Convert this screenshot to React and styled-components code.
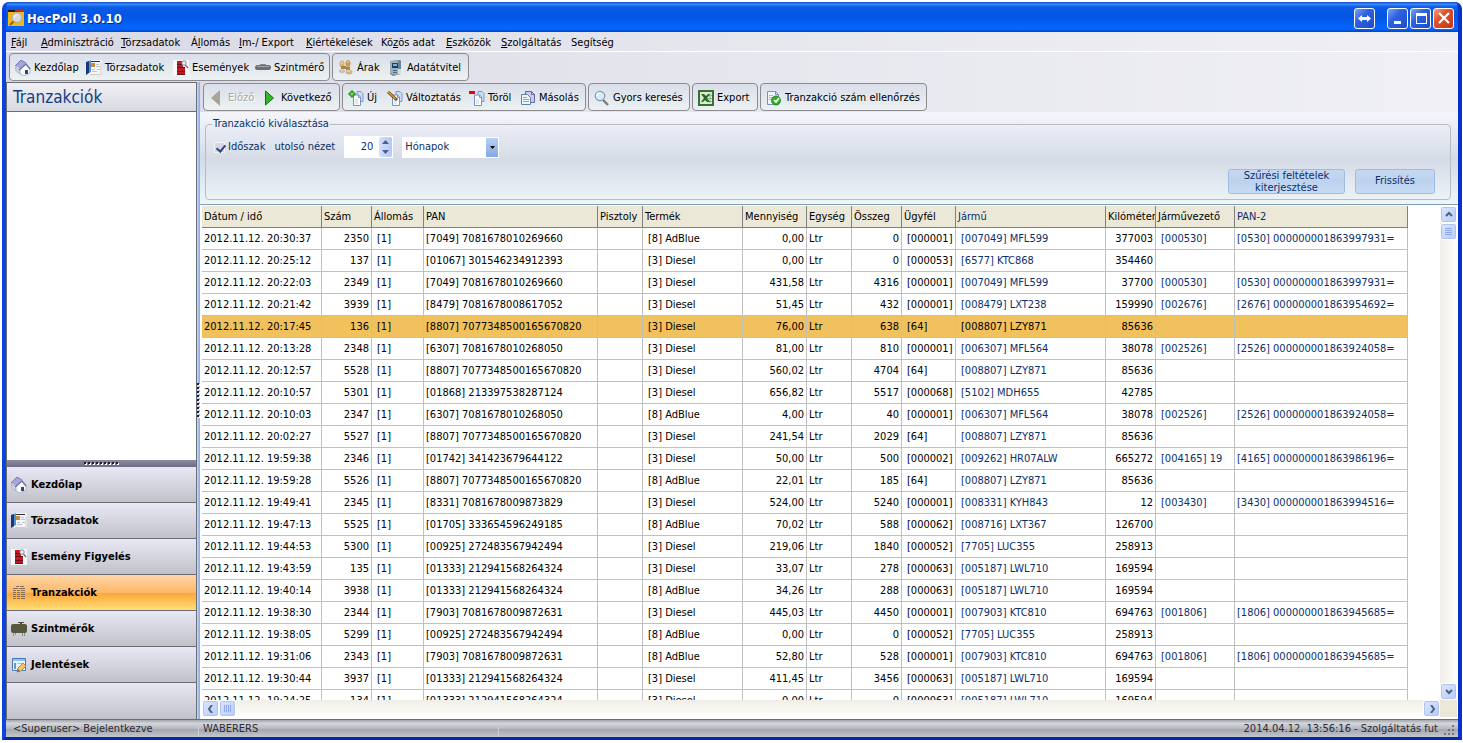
import styled, { createGlobalStyle } from "styled-components";

const GlobalStyle = createGlobalStyle`
  * {
    box-sizing: border-box;
  }
  body {
    margin: 0;
    background: #fff;
    color: #000;
    font: 11px/14px "DejaVu Sans Condensed", "DejaVu Sans", sans-serif;
  }
  button, input, select {
    font: inherit;
    color: inherit;
    padding: 0;
    margin: 0;
    border: 0;
    background: none;
    border-radius: 0;
  }
`;

const Window = styled.div`
  height: calc(100vh - 5px);
  margin: 2px 1px 3px 2px;
  display: flex;
  flex-direction: column;
  overflow: hidden;
  border: 4px solid #0a44dc;
  border-top: 0;
  border-right-color: #0831c8;
  border-bottom-color: #0627b4;
  border-bottom-width: 3px;
  border-radius: 7px 7px 0 0;
  background: #0a44dc;
`;

const TitleBar = styled.header`
  flex: 0 0 30px;
  display: flex;
  align-items: center;
  gap: 3px;
  margin: 0 -4px;
  padding: 2px 8px 0 6px;
  background: linear-gradient(#0a3fc0 0, #3b8cf8 2px, #0a5ce8 5px, #0355e3 14px, #0463fa 24px, #0566ff 27px, #0340cf 30px);
  h1 {
    flex: 1;
    margin: 2px 0 0;
    font-size: 13px;
    line-height: 16px;
    color: #fff;
    text-shadow: 1px 1px #0a2a80;
  }
`;

const CaptionButton = styled.button`
  width: 21px;
  height: 21px;
  margin-left: ${(p) => (p.$apart ? "9px" : "-1px")};
  display: flex;
  align-items: center;
  justify-content: center;
  border: 1px solid #fff;
  border-radius: 3px;
  background: ${(p) =>
    p.$close
      ? "linear-gradient(135deg, #f0a080, #e0502c 40%, #c03810)"
      : "linear-gradient(135deg, #7ca4f4, #2c62e0 40%, #1c4cc8)"};
`;

const MenuBar = styled.nav`
  flex: 0 0 20px;
  display: flex;
  align-items: center;
  padding: 2px 0 0 5px;
  border-bottom: 1px solid #fff;
  background: linear-gradient(90deg, #d8d8e6, #e4e4ec 40%, #f0f0f4);
`;

const MenuItem = styled.button`
  flex: 0 0 ${(p) => p.$w}px;
  text-align: left;
  white-space: nowrap;
`;

const Content = styled.div`
  flex: 1;
  min-height: 0;
  display: flex;
  flex-direction: column;
  background: linear-gradient(90deg, #d8d8e6, #e4e4ec 40%, #f0f0f6);
`;

const ToolBar = styled.div`
  display: flex;
  gap: 2px;
  padding: 1px 3px;
`;

const ToolGroup = styled.div`
  height: 28px;
  display: flex;
  align-items: center;
  padding: 2px 5px 0;
  border: 1px solid #8c8c90;
  border-radius: 4px;
  background: linear-gradient(#d9deea, #e3e8ee 50%, #ecf1f1);
`;

const Tool = styled.button`
  flex: 0 0 ${(p) => p.$w}px;
  height: 20px;
  display: flex;
  align-items: center;
  gap: 3px;
  min-width: 0;
  white-space: nowrap;
  &:disabled {
    color: #a8a8a0;
    text-shadow: 1px 1px #fff;
  }
  svg {
    flex: none;
  }
`;

const Body = styled.div`
  flex: 1;
  min-height: 0;
  display: flex;
`;

const SideBar = styled.aside`
  flex: 0 0 191px;
  display: flex;
  flex-direction: column;
  border: 1px solid #6c6c74;
  border-bottom: 0;
  background: #fff;
  h2 {
    flex: 0 0 27px;
    margin: 0;
    padding: 5px 6px;
    font-size: 17px;
    font-weight: normal;
    line-height: 18px;
    color: #153e82;
    border-bottom: 1px solid #6c6c74;
    background: linear-gradient(#f0f0f4, #d8dae2);
  }
`;

const SideList = styled.div`
  flex: 1;
`;

const Grip = styled.div`
  flex: 0 0 7px;
  display: flex;
  align-items: center;
  justify-content: center;
  background: linear-gradient(#8c8ca0, #6c6c88);
`;

const NavButton = styled.button`
  flex: 0 0 36px;
  display: flex;
  align-items: center;
  gap: 4px;
  padding: 1px 0 0 4px;
  font-weight: bold;
  border-bottom: 1px solid #6c6c74;
  background: ${(p) =>
    p.$active
      ? "linear-gradient(#fdd6a8, #fdb868 50%, #fda53a 51%, #fdde74)"
      : "linear-gradient(#e9e9f6, #d4d5de 50%, #c0c1c9)"};
`;

const NavFiller = styled.div`
  flex: 0 0 36px;
  background: linear-gradient(#e9e9f6, #d4d5de 50%, #c0c1c9);
`;

const Splitter = styled.div`
  flex: 0 0 3px;
  display: flex;
  align-items: center;
  background: linear-gradient(90deg, #c4dafa, #84a8e0);
`;

const Main = styled.main`
  flex: 1;
  min-width: 0;
  display: flex;
  flex-direction: column;
`;

const FilterPanel = styled.section`
  padding: 5px 7px 4px 5px;
  border-bottom: 1px solid #7f9db9;
  color: #0b2f6b;
  background: linear-gradient(#f4f6fa, #e8ebf4 20%, #d5dbe6 52%, #e2e8f0 75%, #edf6f8);
`;

const FieldSet = styled.fieldset`
  height: 83px;
  min-width: 0;
  margin: 0;
  padding: 5px 15px 7px 8px;
  display: flex;
  flex-direction: column;
  justify-content: space-between;
  border: 1px solid #b8bcc0;
  border-radius: 4px;
  legend {
    margin-left: -2px;
    padding: 0 1px;
  }
`;

const FilterRow = styled.div`
  height: 22px;
  display: flex;
  align-items: center;
  justify-content: ${(p) => (p.$end ? "flex-end" : "flex-start")};
  gap: ${(p) => (p.$end ? 10 : 9)}px;
  label {
    display: flex;
    align-items: center;
    gap: 3px;
  }
`;

const CheckBox = styled.input`
  appearance: none;
  width: 11px;
  height: 11px;
  display: flex;
  border: 1px solid #f4f4f4;
  background: #d4d8e4;
  &:checked::before {
    content: "";
    width: 4px;
    height: 7px;
    margin: 0 0 0 3px;
    border: solid #2c4888;
    border-width: 0 2px 2px 0;
    transform: rotate(40deg);
  }
`;

const Spinner = styled.span`
  width: 49px;
  height: 22px;
  display: flex;
  padding: 1px;
  background: #fff;
  input {
    flex: 1;
    min-width: 0;
    padding-right: 6px;
    text-align: right;
    outline: none;
  }
`;

const SpinButtons = styled.span`
  flex: 0 0 13px;
  display: flex;
  flex-direction: column;
  border-radius: 2px;
  background: linear-gradient(90deg, #d4e0fc, #b4c8f4);
  button {
    flex: 1;
    display: flex;
    align-items: center;
    justify-content: center;
  }
`;

const SelectBox = styled.span`
  width: 97px;
  height: 21px;
  display: grid;
  grid-template-columns: 1fr 12px;
  padding: 1px;
  background: #fff;
  select {
    grid-area: 1 / 1 / 2 / 3;
    appearance: none;
    padding-left: 2px;
    outline: none;
  }
  span {
    grid-area: 1 / 2;
    display: flex;
    align-items: center;
    justify-content: center;
    pointer-events: none;
    background: linear-gradient(#b8d0f4, #84a8e0);
  }
`;

const PanelButton = styled.button`
  width: ${(p) => p.$w}px;
  height: 25px;
  line-height: 12px;
  border: 1px solid #9cbce4;
  border-radius: 3px;
  background: linear-gradient(#c6d8f0, #bcd2ee 50%, #c8dcf4);
`;

const GridArea = styled.div`
  flex: 1;
  min-height: 0;
  display: grid;
  grid-template: minmax(0, 1fr) 17px / minmax(0, 1fr) 17px;
  padding: 1px 1px 2px 2px;
  background: #fff;
`;

const GridView = styled.div`
  overflow: hidden;
`;

const Table = styled.table`
  table-layout: fixed;
  width: 1206px;
  border-collapse: separate;
  border-spacing: 0;
  th,
  td {
    height: 22px;
    padding: 0 0 0 2px;
    overflow: hidden;
    white-space: nowrap;
    border: solid #c0c0c0;
    border-width: 0 1px 1px 0;
  }
  th {
    font-weight: normal;
    text-align: left;
    border-color: #808080;
    background: #ebe8d8;
  }
`;

const HeadCell = styled.th`
  color: ${(p) => (p.$blue ? "#0b2f6b" : "#000")};
`;

const Row = styled.tr`
  background: ${(p) => (p.$selected ? "#f1c15d" : "#fff")};
`;

const Cell = styled.td`
  && {
    padding-left: ${(p) => (p.$inset ? 5 : 2)}px;
    padding-right: ${(p) => (p.$right ? 2 : 0)}px;
  }
  text-align: ${(p) => (p.$right ? "right" : "left")};
  color: ${(p) => (p.$blue ? "#0b2f6b" : "#000")};
`;

const ScrollBar = styled.div`
  display: flex;
  flex-direction: ${(p) => (p.$vertical ? "column" : "row")};
  background: linear-gradient(${(p) => (p.$vertical ? "90deg" : "180deg")}, #f0eee8, #fefefb);
`;

const ScrollButton = styled.button`
  flex: 0 0 17px;
  display: flex;
  align-items: center;
  justify-content: center;
  border: 1px solid #fff;
  border-radius: 3px;
  box-shadow: inset 0 0 0 1px #b0c4f0;
  background: linear-gradient(135deg, #dce6fe, #b8ccf8);
`;

const Track = styled.div`
  flex: 1;
`;

const Corner = styled.div`
  background: #ebe8d8;
`;

const StatusBar = styled.footer`
  flex: 0 0 18px;
  display: flex;
  align-items: center;
  color: #2c2c34;
  border-top: 1px solid #6c6c74;
  background: linear-gradient(#a4a6ae, #d4d6da 20%, #b8bac2 50%, #a4a6b0 55%, #c4c6cc);
`;

const StatusCell = styled.span`
  flex: ${(p) => (p.$w ? `0 0 ${p.$w}px` : "1")};
  padding: 0 3px 0 ${(p) => p.$pad || 4}px;
  text-align: ${(p) => (p.$w ? "left" : "right")};
  border-right: 1px solid ${(p) => (p.$w ? "#ccced4" : "transparent")};
`;

const Icon = ({ children, w = 16, h = 16 }) => (
  <svg width={w} height={h} viewBox={`0 0 ${w} ${h}`} aria-hidden="true">
    {children}
  </svg>
);

const HomeIcon = () => (
  <Icon>
    <path d="M0 6 6 0l5 3-5 6z" fill="#a8a4dc" />
    <path d="m0 6 6-6 5 3" fill="none" stroke="#7c78c0" />
    <path d="m0 7 5 3v4L1 11z" fill="#d4d6e0" stroke="#a0a4b4" strokeWidth="0.6" />
    <path d="M5 10v4l4 2 6-3V8l-4-4z" fill="#fafafa" stroke="#a0a8bc" strokeWidth="0.8" />
    <path d="m4 10 7-6 4 5" fill="none" stroke="#6c78a8" strokeWidth="1.4" />
    <path d="M10 10h3v4h-3z" fill="#304878" />
  </Icon>
);

const MasterIcon = () => (
  <Icon>
    <path d="M3 0h13v15H3z" fill="#f4f5fa" />
    <path d="M0 2l3-1v12l-3 2z" fill="#1c3870" />
    <path d="M3 1l2-1v12l-2 1z" fill="#5090d8" />
    <path d="M5 1h9v1H5z" fill="#283040" />
    <path d="M5 3h4v4H5z" fill="#c88c38" />
    <path d="M10 4.500h3M10 6.500h4M6 9.500h3M6 11.500h5M11 9.500h3" stroke="#c0c0cc" />
    <path d="M4 14.500h11V3" fill="none" stroke="#d4ccc0" />
  </Icon>
);

const EventIcon = () => (
  <Icon>
    <path d="M0 0h16v16H0z" fill="#f8f8fa" />
    <path d="M4 1h5v3H4zM4 5h6v2H4zM4 8h8v3H4zM4 12h8v2H4z" fill="#c01820" />
    <path d="M4 4.500h5M4 7.500h8M4 11.500h8M4 14.500h8" stroke="#681018" />
    <circle cx="11" cy="3" r="2.200" fill="#e8eef6" stroke="#888c98" />
    <path d="m12.500 5 2.500 3" stroke="#686c78" strokeWidth="1.200" />
  </Icon>
);

const ProbeIcon = () => (
  <Icon>
    <rect x="0" y="5" width="16" height="5" rx="2.5" fill="#6c7074" />
    <path d="M2 6.5h12" stroke="#a0a4a8" />
    <path d="M5 4h6v1H5z" fill="#84888c" />
  </Icon>
);

const CoinsIcon = () => (
  <Icon>
    <ellipse cx="4" cy="4" rx="2.500" ry="3.500" fill="#d8b070" />
    <ellipse cx="10" cy="3.500" rx="2.500" ry="3.500" fill="#c89c58" />
    <path d="M3 6h5v3H3zM8 7h4v3H8z" fill="#a88450" />
    <ellipse cx="4" cy="11" rx="3" ry="2" fill="#c4c0b8" />
    <ellipse cx="11" cy="12" rx="3.500" ry="2.500" fill="#d0b488" />
    <path d="M3 3h2M9 2h2M9 11h3M3 10h2" stroke="#f4e4c0" />
  </Icon>
);

const TransferIcon = () => (
  <Icon>
    <path d="M2 1 12 0l1 1v13l-8 2-3-2z" fill="#6c8494" />
    <path d="M2 1h8v14l-6-1-2-1z" fill="#9cb0bc" />
    <path d="M4 3h6v5H4z" fill="#1c4060" />
    <path d="M5 4h4v2H5z" fill="#78b4dc" />
    <path d="M5 10.500h4M5 12.500h4" stroke="#506878" />
    <path d="M10 9h3v5h-3z" fill="#d4dce0" />
  </Icon>
);

const Pages = () => (
  <>
    <path d="M9 1.500h4l2 2v8H9z" fill="#c8dcf4" stroke="#8098cc" />
    <path d="M5.500 5h5l2 2v8.500h-7z" fill="#fff" stroke="#7c90c4" />
    <path d="M10.500 5v2.500h2" fill="none" stroke="#7c90c4" />
    <path d="M7 9h3v5H7z" fill="#d8ecf8" />
  </>
);

const NewIcon = () => (
  <Icon>
    <Pages />
    <path d="M3 1h2v2h2v2H5v2H3V5H1V3h2z" fill="#70e050" stroke="#188818" />
  </Icon>
);

const EditIcon = () => (
  <Icon>
    <Pages />
    <path d="m1 2 9 8" stroke="#604010" strokeWidth="3" />
    <path d="m1 2 8 7" stroke="#dca438" strokeWidth="1.4" />
  </Icon>
);

const DeleteIcon = () => (
  <Icon>
    <Pages />
    <path d="M0 1h6v3H0z" fill="#f00000" />
  </Icon>
);

const CopyIcon = () => (
  <Icon>
    <path d="M5.500 1.500h6l3 3v8h-9z" fill="#d0c8e8" stroke="#6468a8" />
    <path d="M11.500 1.500v3h3" fill="none" stroke="#6468a8" />
    <path d="M1.500 4.500h6l3 3v7h-9z" fill="#ecf4fc" stroke="#6480b0" />
    <path d="M3 7.500h4M3 9.500h6M3 11.500h6" stroke="#90a8d0" />
  </Icon>
);

const SearchIcon = () => (
  <Icon>
    <path d="m9 10 5 5" stroke="#787c84" strokeWidth="2.4" />
    <circle cx="6" cy="6" r="4.7" fill="#d4ecfc" stroke="#8c98b0" strokeWidth="1.3" />
    <path d="M3 6c0-2 1-3 3-3" fill="none" stroke="#fff" strokeWidth="1.5" />
  </Icon>
);

const ExcelIcon = () => (
  <Icon>
    <path d="M1 1h14v14H1z" fill="#dcecd4" stroke="#387030" strokeWidth="2" />
    <path d="M12 3v10M10 5.500h4M10 8.500h4M10 11.500h4" stroke="#90b888" />
    <path d="M3 4h3l2 2 2-2h2L9 8l3 4H9L7 10l-2 2H3l3-4z" fill="#286828" />
  </Icon>
);

const CheckPageIcon = () => (
  <Icon>
    <path d="M1.500 1.500h8l3 3v10h-11z" fill="#f0f6fc" stroke="#7c90c0" />
    <path d="M9.500 1.500v3h3" fill="none" stroke="#7c90c0" />
    <path d="M3 5.500h4M3 7.500h6M3 9.500h3" stroke="#a8b8d8" />
    <circle cx="10" cy="10.5" r="4.5" fill="#30b020" stroke="#188018" strokeWidth="0.8" />
    <path d="m8 10 2 2 3-4" fill="none" stroke="#fff" strokeWidth="1.7" />
  </Icon>
);

const ListIcon = () => (
  <Icon>
    <path d="M5 1.500h3M9 1.500h4M2 3.500h5M8 3.500h6" stroke="#80705c" />
    <path
      d="M2 5.500h3M6 5.500h3M10 5.500h4M2 7.500h3M6 7.500h3M10 7.500h4M2 9.500h3M6 9.500h3M10 9.500h4M2 11.500h3M6 11.500h3M10 11.500h4M2 13.500h3M6 13.500h3M10 13.500h4"
      stroke="#80705c"
    />
  </Icon>
);

const TankIcon = () => (
  <Icon>
    <path d="M7 1h6v1h-2v2H9V2H7z" fill="#505040" />
    <rect x="0" y="3" width="16" height="9" rx="2" fill="#585840" />
    <path d="M2.500 12v3M4.500 12v2M11.500 12v3M13.500 12v3" stroke="#8c8c80" />
  </Icon>
);

const ReportIcon = () => (
  <Icon>
    <path d="M1.500 1.500h13v12h-13z" fill="#eaf4fe" stroke="#4878b8" />
    <path d="M2 2h12v2H2z" fill="#90c0ec" />
    <path d="M3 6h2v6H3z" fill="#6894c8" />
    <path d="M6 6.500h5" stroke="#a8c4e4" />
    <path d="m6 15 1-4 5-5 3 3-5 5z" fill="#f4c860" stroke="#c08830" />
    <path d="m6 15 1-3 2 2z" fill="#806040" />
  </Icon>
);

const PrevIcon = () => (
  <Icon>
    <path d="M11 0v16L2 8z" fill="#a8a498" />
  </Icon>
);

const NextIcon = () => (
  <Icon>
    <path d="M3.500 1v14l8-7z" fill="#30b828" stroke="#107010" />
  </Icon>
);

const LogoIcon = () => (
  <Icon>
    <path d="M0 2h16v14H0z" fill="#f0b818" />
    <path d="M0 0h7v2H0z" fill="#281808" />
    <path d="M7 0h9v2H7z" fill="#d02818" />
    <path d="m6 11-4 4" stroke="#986018" strokeWidth="2" />
    <circle cx="9" cy="7.500" r="5" fill="#d8d8d8" stroke="#a8a8a0" />
    <path d="M6.500 8c0-2 1-3 3-3" fill="none" stroke="#fff" />
  </Icon>
);

const arrows = {
  up: "m1 5 3-3 3 3",
  down: "m1 2 3 3 3-3",
  left: "m5 0-3 4 3 4",
  right: "m3 0 3 4-3 4",
};

const Arrow = ({ dir }) => (
  <Icon w={8} h={8}>
    <path d={arrows[dir]} fill="none" stroke="#4d6185" strokeWidth="2" />
  </Icon>
);

const GripDots = ({ vertical }) => (
  <Icon w={vertical ? 3 : 36} h={vertical ? 36 : 3}>
    <path d={vertical ? "M2 1v35" : "M1 2h35"} stroke="#fff" strokeWidth="2" strokeDasharray="2 2" />
    <path d={vertical ? "M1 0v36" : "M0 1h36"} stroke="#202028" strokeWidth="2" strokeDasharray="2 2" />
  </Icon>
);

const menu = [
  ["", "F", "ájl", 30],
  ["", "A", "dminisztráció", 80],
  ["", "T", "örzsadatok", 70],
  ["Á", "l", "lomás", 48],
  ["", "I", "m-/ Export", 67],
  ["", "K", "iértékelések", 75],
  ["Kö", "z", "ös adat", 65],
  ["", "E", "szközök", 55],
  ["", "S", "zolgáltatás", 70],
  ["Se", "g", "ítség", 50],
];

const mainTools = [
  [
    ["Kezdőlap", HomeIcon, 71],
    ["Törzsadatok", MasterIcon, 87],
    ["Események", EventIcon, 82],
    ["Szintmérő", ProbeIcon, 69],
  ],
  [
    ["Árak", CoinsIcon, 50],
    ["Adatátvitel", TransferIcon, 75],
  ],
];

const gridTools = [
  [
    ["Előző", PrevIcon, 53, true],
    ["Következő", NextIcon, 72],
  ],
  [
    ["Új", NewIcon, 39],
    ["Változtatás", EditIcon, 82],
    ["Töröl", DeleteIcon, 51],
    ["Másolás", CopyIcon, 60],
  ],
  [["Gyors keresés", SearchIcon, 90]],
  [["Export", ExcelIcon, 54]],
  [["Tranzakció szám ellenőrzés", CheckPageIcon, 155]],
];

const navItems = [
  ["Kezdőlap", HomeIcon],
  ["Törzsadatok", MasterIcon],
  ["Esemény Figyelés", EventIcon],
  ["Tranzakciók", ListIcon],
  ["Szintmérők", TankIcon],
  ["Jelentések", ReportIcon],
];

const columns = [
  { title: "Dátum / idő", w: 120 },
  { title: "Szám", w: 50, right: true },
  { title: "Állomás", w: 52, inset: true },
  { title: "PAN", w: 174 },
  { title: "Pisztoly", w: 45 },
  { title: "Termék", w: 100, inset: true },
  { title: "Mennyiség", w: 64, right: true },
  { title: "Egység", w: 45 },
  { title: "Összeg", w: 50, right: true },
  { title: "Ügyfél", w: 54, inset: true },
  { title: "Jármű", w: 150, inset: true, blue: true, blueHead: true },
  { title: "Kilóméter", w: 50, right: true },
  { title: "Járművezető", w: 79, inset: true, blue: true },
  { title: "PAN-2", w: 173, blue: true, blueHead: true },
];

const D = "[3] Diesel";
const A = "[8] AdBlue";

// time, number, PAN, product, quantity, amount, customer, vehicle, km, driver, PAN-2
const transactions = [
  ["20:30:37", "2350", "[7049] 7081678010269660", A, "0,00", "0", "[000001]", "[007049] MFL599", "377003", "[000530]", "[0530] 000000001863997931="],
  ["20:25:12", "137", "[01067] 301546234912393", D, "0,00", "0", "[000053]", "[6577] KTC868", "354460"],
  ["20:22:03", "2349", "[7049] 7081678010269660", D, "431,58", "4316", "[000001]", "[007049] MFL599", "37700", "[000530]", "[0530] 000000001863997931="],
  ["20:21:42", "3939", "[8479] 7081678008617052", D, "51,45", "432", "[000001]", "[008479] LXT238", "159990", "[002676]", "[2676] 000000001863954692="],
  ["20:17:45", "136", "[8807] 7077348500165670820", D, "76,00", "638", "[64]", "[008807] LZY871", "85636"],
  ["20:13:28", "2348", "[6307] 7081678010268050", D, "81,00", "810", "[000001]", "[006307] MFL564", "38078", "[002526]", "[2526] 000000001863924058="],
  ["20:12:57", "5528", "[8807] 7077348500165670820", D, "560,02", "4704", "[64]", "[008807] LZY871", "85636"],
  ["20:10:57", "5301", "[01868] 213397538287124", D, "656,82", "5517", "[000068]", "[5102] MDH655", "42785"],
  ["20:10:03", "2347", "[6307] 7081678010268050", A, "4,00", "40", "[000001]", "[006307] MFL564", "38078", "[002526]", "[2526] 000000001863924058="],
  ["20:02:27", "5527", "[8807] 7077348500165670820", D, "241,54", "2029", "[64]", "[008807] LZY871", "85636"],
  ["19:59:38", "2346", "[01742] 341423679644122", D, "50,00", "500", "[000002]", "[009262] HR07ALW", "665272", "[004165] 19", "[4165] 000000001863986196="],
  ["19:59:28", "5526", "[8807] 7077348500165670820", A, "22,01", "185", "[64]", "[008807] LZY871", "85636"],
  ["19:49:41", "2345", "[8331] 7081678009873829", D, "524,00", "5240", "[000001]", "[008331] KYH843", "12", "[003430]", "[3430] 000000001863994516="],
  ["19:47:13", "5525", "[01705] 333654596249185", A, "70,02", "588", "[000062]", "[008716] LXT367", "126700"],
  ["19:44:53", "5300", "[00925] 272483567942494", D, "219,06", "1840", "[000052]", "[7705] LUC355", "258913"],
  ["19:43:59", "135", "[01333] 212941568264324", D, "33,07", "278", "[000063]", "[005187] LWL710", "169594"],
  ["19:40:14", "3938", "[01333] 212941568264324", A, "34,26", "288", "[000063]", "[005187] LWL710", "169594"],
  ["19:38:30", "2344", "[7903] 7081678009872631", D, "445,03", "4450", "[000001]", "[007903] KTC810", "694763", "[001806]", "[1806] 000000001863945685="],
  ["19:38:05", "5299", "[00925] 272483567942494", A, "0,00", "0", "[000052]", "[7705] LUC355", "258913"],
  ["19:31:06", "2343", "[7903] 7081678009872631", A, "52,80", "528", "[000001]", "[007903] KTC810", "694763", "[001806]", "[1806] 000000001863945685="],
  ["19:30:44", "3937", "[01333] 212941568264324", D, "411,45", "3456", "[000063]", "[005187] LWL710", "169594"],
  ["19:24:25", "134", "[01333] 212941568264324", D, "0,00", "0", "[000063]", "[005187] LWL710", "169594"],
];

const toCells = ([time, no, pan, product, qty, sum, customer, car, km, driver = "", pan2 = ""]) => [
  `2012.11.12. ${time}`, no, "[1]", pan, "", product, qty, "Ltr", sum, customer, car, km, driver, pan2,
];

const Tools = ({ groups }) => (
  <ToolBar>
    {groups.map((group) => (
      <ToolGroup key={group[0][0]}>
        {group.map(([label, Glyph, w, disabled]) => (
          <Tool key={label} $w={w} disabled={disabled}>
            <Glyph />
            {label}
          </Tool>
        ))}
      </ToolGroup>
    ))}
  </ToolBar>
);

const TransactionTable = () => (
  <Table>
    <colgroup>
      {columns.map((c) => (
        <col key={c.title} width={c.w} />
      ))}
    </colgroup>
    <thead>
      <tr>
        {columns.map((c) => (
          <HeadCell key={c.title} $blue={c.blueHead}>
            {c.title}
          </HeadCell>
        ))}
      </tr>
    </thead>
    <tbody>
      {transactions.map((t, r) => (
        <Row key={t[0]} $selected={r === 4}>
          {toCells(t).map((text, i) => (
            <Cell
              key={columns[i].title}
              $right={columns[i].right}
              $inset={columns[i].inset}
              $blue={columns[i].blue && r !== 4}
            >
              {text}
            </Cell>
          ))}
        </Row>
      ))}
    </tbody>
  </Table>
);

export default function App() {
  return (
    <Window>
      <GlobalStyle />
      <TitleBar>
        <LogoIcon />
        <h1>HecPoll 3.0.10</h1>
        <CaptionButton aria-label="Átméretezés">
          <Icon w={15} h={15}>
            <path d="M1 7.500 5 4v2h5V4l4 3.500L10 11V9H5v2z" fill="#fff" />
          </Icon>
        </CaptionButton>
        <CaptionButton $apart aria-label="Kis méret">
          <Icon>
            <path d="M4 11h7v3H4z" fill="#fff" />
          </Icon>
        </CaptionButton>
        <CaptionButton aria-label="Teljes méret">
          <Icon>
            <path d="M3 3h11v11H3zM4 6v7h9V6z" fill="#fff" fillRule="evenodd" />
          </Icon>
        </CaptionButton>
        <CaptionButton $close aria-label="Bezárás">
          <Icon>
            <path d="m3 3 10 10M13 3 3 13" stroke="#fff" strokeWidth="2.2" />
          </Icon>
        </CaptionButton>
      </TitleBar>
      <MenuBar>
        {menu.map(([before, key, after, w]) => (
          <MenuItem key={before + key + after} $w={w}>
            {before}
            <u>{key}</u>
            {after}
          </MenuItem>
        ))}
      </MenuBar>
      <Content>
        <Tools groups={mainTools} />
        <Body>
          <SideBar>
            <h2>Tranzakciók</h2>
            <SideList />
            <Grip>
              <GripDots />
            </Grip>
            {navItems.map(([label, Glyph]) => (
              <NavButton key={label} $active={label === "Tranzakciók"}>
                <Glyph />
                {label}
              </NavButton>
            ))}
            <NavFiller />
          </SideBar>
          <Splitter>
            <GripDots vertical />
          </Splitter>
          <Main>
            <Tools groups={gridTools} />
            <FilterPanel>
              <FieldSet>
                <legend>Tranzakció kiválasztása</legend>
                <FilterRow>
                  <label>
                    <CheckBox type="checkbox" defaultChecked />
                    Időszak
                  </label>
                  <label htmlFor="period">utolsó nézet</label>
                  <Spinner>
                    <input id="period" type="text" defaultValue="20" />
                    <SpinButtons>
                      <button aria-label="Növelés">
                        <Icon w={7} h={4}>
                          <path d="M0 4h7L3.500 0z" fill="#4d6185" />
                        </Icon>
                      </button>
                      <button aria-label="Csökkentés">
                        <Icon w={7} h={4}>
                          <path d="M0 0h7L3.500 4z" fill="#4d6185" />
                        </Icon>
                      </button>
                    </SpinButtons>
                  </Spinner>
                  <SelectBox>
                    <select aria-label="Időegység" defaultValue="Hónapok">
                      <option>Hónapok</option>
                    </select>
                    <span>
                      <Icon w={5} h={3}>
                        <path d="M0 0h5L2.500 3z" />
                      </Icon>
                    </span>
                  </SelectBox>
                </FilterRow>
                <FilterRow $end>
                  <PanelButton $w={117}>
                    Szűrési feltételek
                    <br />
                    kiterjesztése
                  </PanelButton>
                  <PanelButton $w={80}>Frissítés</PanelButton>
                </FilterRow>
              </FieldSet>
            </FilterPanel>
            <GridArea>
              <GridView>
                <TransactionTable />
              </GridView>
              <ScrollBar $vertical>
                <ScrollButton aria-label="Fel">
                  <Arrow dir="up" />
                </ScrollButton>
                <ScrollButton aria-label="Függőleges görgető">
                  <Icon w={8} h={8}>
                    <path d="M0 .5h7M0 2.500h7M0 4.500h7M0 6.500h7" stroke="#8ca8ec" />
                  </Icon>
                </ScrollButton>
                <Track />
                <ScrollButton aria-label="Le">
                  <Arrow dir="down" />
                </ScrollButton>
              </ScrollBar>
              <ScrollBar>
                <ScrollButton aria-label="Balra">
                  <Arrow dir="left" />
                </ScrollButton>
                <ScrollButton aria-label="Vízszintes görgető">
                  <Icon w={8} h={8}>
                    <path d="M.5 0v7M2.500 0v7M4.500 0v7M6.500 0v7" stroke="#8ca8ec" />
                  </Icon>
                </ScrollButton>
                <Track />
                <ScrollButton aria-label="Jobbra">
                  <Arrow dir="right" />
                </ScrollButton>
              </ScrollBar>
              <Corner />
            </GridArea>
          </Main>
        </Body>
        <StatusBar>
          <StatusCell $w={193} $pad={7}>
            &lt;Superuser&gt; Bejelentkezve
          </StatusCell>
          <StatusCell $w={300}>WABERERS</StatusCell>
          <StatusCell>2014.04.12. 13:56:16 - Szolgáltatás fut</StatusCell>
          <Icon>
            <path
              d="M10 4h2v2h-2zM6 8h2v2H6zM10 8h2v2h-2zM2 12h2v2H2zM6 12h2v2H6zM10 12h2v2h-2z"
              fill="#74767e"
            />
          </Icon>
        </StatusBar>
      </Content>
    </Window>
  );
}
